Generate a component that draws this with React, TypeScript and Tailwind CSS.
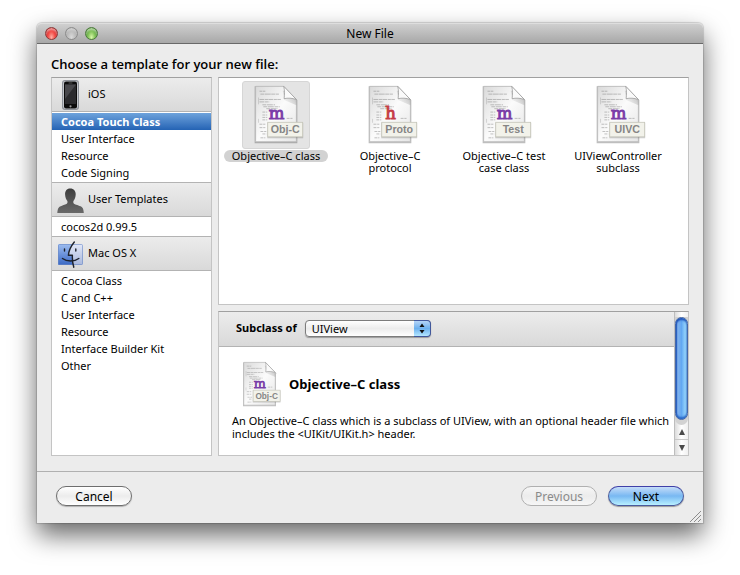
import { useId, useState } from "react";

type Template = { name: string; tag: string; letter: string };

const templates: Template[] = [
  { name: "Objective–C class", tag: "Obj-C", letter: "m" },
  { name: "Objective–C protocol", tag: "Proto", letter: "h" },
  { name: "Objective–C test case class", tag: "Test", letter: "m" },
  { name: "UIViewController subclass", tag: "UIVC", letter: "m" },
];

function PhoneIcon() {
  return (
    <svg width="28" height="32" viewBox="0 0 28 32" aria-hidden="true">
      <rect x="6" y="1" width="17" height="30" rx="3" fill="#8e9299" />
      <rect x="7" y="2" width="15" height="28" rx="2.4" fill="#c3c6cb" />
      <rect x="8" y="2.500" width="13" height="27" rx="2" fill="#0c0c0c" />
      <rect x="9" y="5.500" width="11" height="19.500" fill="#2b2b2e" />
      <path d="M9 5.500h11L9 20z" fill="#48484c" />
      <rect x="12.500" y="3.500" width="4" height="1" rx=".5" fill="#555" />
      <circle cx="14.500" cy="27.300" r="1.1" fill="#999" />
    </svg>
  );
}

function PersonIcon() {
  return (
    <svg width="28" height="32" viewBox="0 0 28 32" aria-hidden="true">
      <defs>
        <linearGradient id="person" x1="0" x2="0" y1="0" y2="1">
          <stop offset="0" stopColor="#3c3c3c" />
          <stop offset="1" stopColor="#6a6a6a" />
        </linearGradient>
      </defs>
      <path
        d="M14.200 4.500c-3.600 0-5.300 2.700-5.100 6 .1 2.700 1 5 2.300 6.400.3 1.700 0 2.700-1.500 3.300-3 1.200-6.500 1.800-7.600 4-.6 1.200-.9 3-1 4.800h26.500c-.1-1.800-.4-3.600-1-4.800-1.100-2.200-4.900-2.800-7.900-4-1.500-.6-1.800-1.600-1.500-3.300 1.300-1.400 2.200-3.700 2.300-6.400.2-3.300-1.900-6-5.500-6z"
        fill="url(#person)"
      />
    </svg>
  );
}

function FinderIcon() {
  return (
    <svg width="28" height="32" viewBox="0 0 28 32" aria-hidden="true">
      <defs>
        <linearGradient id="face-left" x1="0" x2="0" y1="0" y2="1">
          <stop offset="0" stopColor="#9dbdf0" />
          <stop offset="1" stopColor="#3a68c4" />
        </linearGradient>
        <linearGradient id="face-right" x1="0" x2="0" y1="0" y2="1">
          <stop offset="0" stopColor="#e2e8f8" />
          <stop offset="1" stopColor="#a9b8dc" />
        </linearGradient>
      </defs>
      <rect x="2" y="6" width="25" height="21" rx="1.500" fill="url(#face-right)" />
      <path d="M3.500 6h12.300c-2 4-3.300 7.500-3.500 11h3.800c-.1 3.500 0 6.600.9 10H3.500A1.500 1.500 0 0 1 2 25.500V7.500A1.500 1.500 0 0 1 3.500 6z" fill="url(#face-left)" />
      <rect x="2.500" y="6.500" width="24" height="20" rx="1" fill="none" stroke="#6b89c4" strokeOpacity=".6" />
      <path d="M18.300 4c-3.600 4.500-5.600 8.500-5.900 13.200h4c-.2 4.300.1 8 1.400 12" fill="none" stroke="#1d222c" strokeWidth="1.400" strokeLinecap="round" strokeLinejoin="round" />
      <path d="M6.500 20.500c4.300 3.300 12 3.300 16.300 0M8.500 11v2M19.800 11v2" fill="none" stroke="#1d222c" strokeWidth="1.400" strokeLinecap="round" />
    </svg>
  );
}

function DocumentIcon({ template, className }: { template: Template; className: string }) {
  const id = useId();
  const ink = template.letter === "m" ? "#7a3da8" : "#c63d45";
  return (
    <svg viewBox="0 0 68 68" className={className} aria-hidden="true">
      <defs>
        <linearGradient id={id} x1="0" x2="1" y1="0" y2="1">
          <stop offset="0" stopColor="#dadada" />
          <stop offset=".5" stopColor="#fbfbfb" />
          <stop offset="1" stopColor="#e6e6e6" />
        </linearGradient>
        <linearGradient id={id + "shade"} x1="1" x2="0" y1="0" y2="1">
          <stop offset="0" stopColor="#555" stopOpacity=".8" />
          <stop offset="1" stopColor="#999" stopOpacity="0" />
        </linearGradient>
      </defs>
      <path d="M12 4.500h30l14 14.500v44h-44z" fill="#000" opacity=".25" />
      <path d="M13 4.500h29l13 13.500v43.500h-42z" fill={"url(#" + id + ")"} stroke="#b8b8b8" strokeWidth=".8" />
      <g stroke="#777" strokeWidth=".9" opacity=".5">
        <path d="M17 9.500h6" strokeDasharray="3 .6" />
        <path d="M18 12.500h19" strokeDasharray="4 .6 6 .5" />
        <path d="M17 18h22M17 20.500h10" strokeDasharray="5 .7 3 .5" />
        <path d="M20 23.500h13M21 25.500h17M24 27.500h12" strokeDasharray="4 .7 6 .8" />
        <path d="M20 31h5M20 34h5M20 36.500h5M45 37.500h6M20 39h5M17 43.500h6M17 47h6" strokeDasharray="3 .8" />
        <path d="M18 51h6M20 53.500h4M18 57.500h5" strokeDasharray="3 .8" />
        <path d="M16 16v7M16 38v4" strokeWidth=".5" />
      </g>
      <path d="M41 9l1.500 9.500L55 24v-6L42 9z" fill={"url(#" + id + "shade)"} opacity=".6" />
      <path d="M42 4.500c1 4.500 1 8.500.3 12.700 4-.9 8.200-.7 12.700.8z" fill="#fafafa" stroke="#8e8e8e" strokeWidth=".7" />
      <text
        x="34.500"
        y="38.500"
        textAnchor="middle"
        className="font-['DejaVu_Serif',serif] text-[17px]"
        fill={ink}
        stroke={ink}
        strokeWidth="1"
      >
        {template.letter}
      </text>
      <rect x="25" y="42" width="37" height="16" fill="#000" opacity=".18" />
      <rect x="25.500" y="41.500" width="36" height="15" fill="#f2f2ea" stroke="#c4c4b8" strokeWidth=".8" />
      <text
        x="43.500"
        y="53"
        textAnchor="middle"
        className="font-['Liberation_Sans',sans-serif] text-[11px] font-bold"
        fill="#858585"
      >
        {template.tag}
      </text>
    </svg>
  );
}

const groups = [
  { title: "iOS", icon: <PhoneIcon />, items: ["Cocoa Touch Class", "User Interface", "Resource", "Code Signing"], head: "h-[34px]", list: "pt-px pb-px" },
  { title: "User Templates", icon: <PersonIcon />, items: ["cocos2d 0.99.5"], head: "h-[35px] border-t", list: "py-px" },
  {
    title: "Mac OS X",
    icon: <FinderIcon />,
    items: ["Cocoa Class", "C and C++", "User Interface", "Resource", "Interface Builder Kit", "Other"],
    head: "h-[35px] border-t",
    list: "pt-px",
  },
];

function Sidebar({ selected, onSelect }: { selected: string; onSelect: (key: string) => void }) {
  return (
    <nav className="w-[161px] shrink-0 border border-[#c4c4c4] border-t-[#a0a0a0] bg-white">
      {groups.map((group) => (
        <section key={group.title}>
          <h2
            className={
              "flex items-center gap-1 border-b border-[#b3b3b3] bg-linear-to-b from-[#ececec] to-[#d9d9d9] pl-1 text-[11px] " +
              group.head
            }
          >
            {group.icon}
            {group.title}
          </h2>
          <ul className={group.list}>
            {group.items.map((item) => {
              const key = group.title + "/" + item;
              return (
                <li key={key}>
                  <button
                    type="button"
                    onClick={() => onSelect(key)}
                    className={
                      "block h-[17px] w-full pl-[9px] text-left text-[11px] leading-4 " +
                      (key === selected ? "bg-linear-to-b from-[#6ea3dc] to-[#2463b4] font-bold text-white" : "")
                    }
                  >
                    {item}
                  </button>
                </li>
              );
            })}
          </ul>
        </section>
      ))}
    </nav>
  );
}

function ScrollBar() {
  return (
    <div className="flex w-[14px] shrink-0 flex-col border-l border-[#bdbdbd] bg-linear-to-r from-[#dcdcdc] via-white to-[#f0f0f0]" aria-hidden="true">
      <div className="mt-[5px] flex-1 rounded-b-full bg-[#d2d2d2] pb-[5px]">
        <div className="h-full rounded-full border border-[#4568a8] bg-linear-to-r from-[#8fb8ea] via-[#62a8f2] to-[#a9e6ff] shadow-[inset_0_2px_2px_#1c50b8,inset_0_-2px_2px_#2868c8,inset_1px_0_1px_#2c62c4]" />
      </div>
      <div className="flex h-[15px] items-center justify-center border-b border-[#c8c8c8]">
        <svg width="6" height="6" viewBox="0 0 6 6"><path d="M3 0l3 6H0z" fill="#4a4a4a" /></svg>
      </div>
      <div className="flex h-[15px] items-center justify-center">
        <svg width="6" height="6" viewBox="0 0 6 6"><path d="M3 6l3-6H0z" fill="#4a4a4a" /></svg>
      </div>
    </div>
  );
}

export default function App() {
  const [group, setGroup] = useState("iOS/Cocoa Touch Class");
  const [current, setCurrent] = useState(0);
  const template = templates[current];

  return (
    <div className="min-h-screen bg-white px-[37px] pt-[23px] pb-[51px] font-['Noto_Sans',sans-serif] text-[11px] text-black">
      <main className="rounded-t-[5px] bg-[#ececec] shadow-[0_0_1px_1px_rgba(0,0,0,0.15),0_12px_26px_rgba(0,0,0,0.6)]">
        <header className="relative flex h-[21px] items-center justify-center rounded-t-[5px] border-t border-b border-t-[#dedede] border-b-[#696969] bg-linear-to-b from-[#cfcfcf] to-[#a8a8a8]">
          <div className="absolute left-2 flex gap-[7px]">
            <button type="button" aria-label="Close" className="size-[13px] rounded-full border border-[#8b3a3a] bg-radial-[at_50%_85%] from-[#ffb0a4] via-[#f0403c] to-[#a01c20] shadow-[inset_0_2px_2px_rgba(255,255,255,0.5)]" />
            <button type="button" aria-label="Minimize" className="size-[13px] rounded-full border border-[#8c8c8c] bg-radial-[at_50%_85%] from-[#dadada] via-[#bcbcbc] to-[#989898] shadow-[inset_0_2px_2px_rgba(255,255,255,0.4)]" />
            <button type="button" aria-label="Zoom" className="size-[13px] rounded-full border border-[#4c7a3c] bg-radial-[at_50%_85%] from-[#d8f8a8] via-[#78bc50] to-[#3c7c2c] shadow-[inset_0_2px_2px_rgba(255,255,255,0.5)]" />
          </div>
          <h1 className="text-[12px]">New File</h1>
        </header>

        <div className="px-[14px] pt-3 pb-[15px]">
          <p className="mb-1 font-['Open_Sans',sans-serif] text-[13px] leading-[17px] font-semibold">Choose a template for your new file:</p>
          <div className="flex gap-[6px]">
            <Sidebar selected={group} onSelect={setGroup} />
            <div className="flex min-w-0 flex-1 flex-col gap-[6px]">
              <ul className="grid h-[228px] grid-cols-[repeat(auto-fill,114px)] content-start border border-[#c4c4c4] border-t-[#a0a0a0] bg-white pt-[3px]">
                {templates.map((t, i) => (
                  <li key={t.name}>
                    <button type="button" onClick={() => setCurrent(i)} className="flex w-full flex-col items-center gap-px">
                      <span className={"rounded-[3px] border " + (i === current ? "border-[#d6d6d6] bg-[#e4e4e4]" : "border-transparent")}>
                        <DocumentIcon template={t} className="size-[66px]" />
                      </span>
                      <span className={"max-w-[108px] rounded-full px-2 leading-3 " + (i === current ? "bg-[#d2d2d2]" : "")}>
                        {t.name}
                      </span>
                    </button>
                  </li>
                ))}
              </ul>

              <section className="flex h-[145px] border border-[#c4c4c4] border-t-[#a0a0a0] bg-white">
                <div className="min-w-0 flex-1">
                  <div className="flex h-[35px] items-center gap-2 border-b border-[#b3b3b3] bg-linear-to-b from-[#ececec] to-[#d9d9d9] pb-px pl-[17px]">
                    <label htmlFor="superclass" className="text-[11px] font-bold">Subclass of</label>
                    <div className="relative">
                      <select
                        id="superclass"
                        defaultValue="UIView"
                        className="block h-[17px] w-[126px] appearance-none rounded-[4px] border border-[#7c7c7c] bg-linear-to-b from-white via-[#ececec] to-white pl-[6px] text-[11px] leading-[15px] shadow-[0_1px_1px_rgba(0,0,0,0.3)]"
                      >
                        <option>UIView</option>
                        <option>UIViewController</option>
                        <option>NSObject</option>
                      </select>
                      <span className="pointer-events-none absolute inset-y-0 right-0 flex w-[17px] items-center justify-center rounded-r-[4px] border border-l-0 border-[#41589c] bg-linear-to-b from-[#b4d4f6] via-[#6cb0ee] to-[#b4e8ff]">
                        <svg width="6" height="11" viewBox="0 0 6 11" aria-hidden="true">
                          <path d="M3 0.500l2.500 3.500h-5zM3 10.500l2.500-3.500h-5z" fill="#111" />
                        </svg>
                      </span>
                    </div>
                  </div>
                  <div className="pt-3 pl-[13px]">
                    <div className="flex items-center gap-1 pl-[2px]">
                      <DocumentIcon template={template} className="size-[51px]" />
                      <h2 className="text-[13px] font-bold">{template.name}</h2>
                    </div>
                    <p className="mt-1 leading-[13px]">
                      An Objective–C class which is a subclass of UIView, with an optional header file which includes the &lt;UIKit/UIKit.h&gt; header.
                    </p>
                  </div>
                </div>
                <ScrollBar />
              </section>
            </div>
          </div>
        </div>

        <footer className="relative flex h-[52px] justify-between border-t border-[#b0b0b0] pt-[14px] pr-[19px] pl-[19px]">
          <button type="button" className="h-5 w-[76px] rounded-full border border-[#6e6e6e] bg-linear-to-b from-white via-[#ececec] to-white text-[12px] leading-[17px] shadow-[0_1px_1px_rgba(0,0,0,0.25)]">
            Cancel
          </button>
          <div className="flex gap-[11px]">
            <button type="button" disabled className="h-5 w-[76px] rounded-full border border-[#b0b0b0] bg-linear-to-b from-[#f6f6f6] via-[#ececec] to-[#f6f6f6] text-[12px] leading-[17px] text-[#8a8a8a]">
              Previous
            </button>
            <button type="button" className="h-5 w-[76px] rounded-full border border-[#4a5a9c] border-t-[#4040a8] bg-linear-to-b from-[#c4dcf8] via-[#78b8f2] to-[#b8f0ff] text-[12px] leading-[17px] shadow-[0_1px_1px_rgba(0,0,0,0.35)]">
              Next
            </button>
          </div>
          <svg className="absolute right-0.5 bottom-px" width="11" height="11" viewBox="0 0 11 11" aria-hidden="true">
            <path d="M0 11L11 0M4 11l7-7M8 11l3-3" stroke="#8c8c8c" strokeWidth="1" />
          </svg>
        </footer>
      </main>
    </div>
  );
}
